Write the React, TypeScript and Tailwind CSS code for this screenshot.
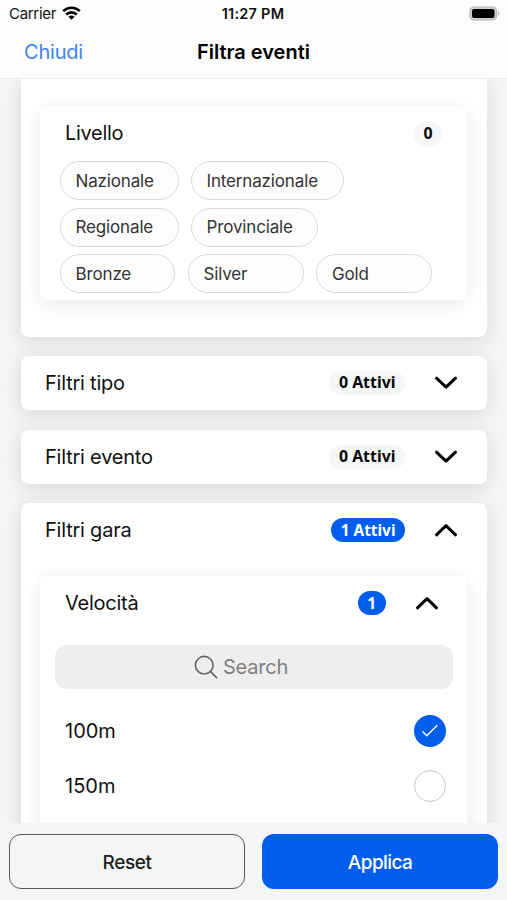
import type { ReactNode } from "react";

const cardShadow = "shadow-[0_4px_20px_rgba(0,0,0,0.12)]";

function Chevron({ up = false }: { up?: boolean }) {
  return (
    <svg width="24" height="14" viewBox="0 0 24 14" fill="none" stroke="#000" strokeWidth="3" strokeLinecap="round" strokeLinejoin="round">
      <path d={up ? "M2.5 11.8 12 2.6l9.5 9.2" : "M2.5 2.2 12 11.2l9.5-9"} />
    </svg>
  );
}

function Badge({ children, active = false }: { children: ReactNode; active?: boolean }) {
  return (
    <span
      className={`flex h-6 items-center justify-center rounded-full px-[9.5px] font-['Noto_Sans',sans-serif] font-bold ${
        active ? "bg-[#005eea] text-[15.4px] text-white" : "bg-[#f5f6f8] text-[15.9px] text-[#080808]"
      }`}
    >
      {children}
    </span>
  );
}

function Pill({ label, width }: { label: string; width: string }) {
  return (
    <div className={`flex h-[39px] items-center rounded-full border border-[#d9d9d9] bg-[#fdfdfd] pt-[2px] pl-[15px] text-[17px] tracking-[-0.15px] text-[#333] ${width}`}>
      {label}
    </div>
  );
}

function FilterHeader({ title, active = false }: { title: string; active?: boolean }) {
  return (
    <div className="flex h-[54px] items-center pr-[29px] pl-6">
      <span className="flex-1 text-xl tracking-[-0.22px]">{title}</span>
      <Badge active={active}>{active ? "1 Attivi" : "0 Attivi"}</Badge>
      <span className="ml-[29px]">
        <Chevron up={active} />
      </span>
    </div>
  );
}

export default function App() {
  return (
    <div className="flex h-[900px] w-[507px] flex-col overflow-hidden bg-[#f3f5f7] font-[Inter,sans-serif] text-[#111]">
      <header className="z-10 h-[79px] shrink-0 border-b border-[#e9eaeb] bg-[#fdfdfd]">
        <div className="grid h-7 grid-cols-3 items-center pr-[7px] pl-[9px] text-[15px]">
          <span className="flex items-center gap-[6px] tracking-[-0.3px]">
            Carrier
            <svg className="-mt-[2px]" width="19" height="14" viewBox="0 0 19 14" fill="none" stroke="#000" strokeWidth="2.6">
              <path d="M1.2 5.2C5.8.6 13.2.6 17.8 5.2" />
              <path d="M4.2 8.5c3-2.9 7.6-2.9 10.6 0" />
              <path d="M6.4 10.7c1.8-1.6 4.4-1.6 6.2 0L9.5 13.8z" fill="#000" stroke="none" />
            </svg>
          </span>
          <span className="-ml-[3px] text-center text-[14.5px] font-semibold tracking-[0.25px]">11:27 PM</span>
          <span className="flex justify-end">
            <svg className="-mt-[2px]" width="31" height="15" viewBox="0 0 31 15">
              <rect x="1" y="1" width="26.5" height="13" rx="4" fill="#d0d0d0" stroke="#b8b8b8" strokeWidth="1.2" />
              <rect x="3" y="3" width="22.5" height="9" rx="2" fill="#000" />
              <path d="M28.8 5.3c2 1 2 3.6 0 4.5z" fill="#b8b8b8" />
            </svg>
          </span>
        </div>
        <div className="grid grid-cols-[1fr_auto_1fr] items-center px-6 pt-[10px]">
          <span className="text-xl tracking-[-0.2px] text-[#3f84ed]">Chiudi</span>
          <h1 className="text-xl font-semibold tracking-[-0.02px] text-black">Filtra eventi</h1>
          <span />
        </div>
      </header>

      <main className="flex h-[744px] shrink-0 flex-col gap-[19.5px] overflow-hidden pr-5 pl-[21px]">
        <section className={`h-[258px] shrink-0 rounded-b-lg bg-white pt-[27px] pr-5 pl-[19px] ${cardShadow}`}>
          <div className="h-[194px] rounded-lg bg-white shadow-[0_4px_20px_rgba(0,0,0,0.09)]">
            <div className="flex h-[55px] items-center justify-between pr-[25px] pl-[25px]">
              <span className="-mt-px text-xl tracking-[-0.3px]">Livello</span>
              <Badge>0</Badge>
            </div>
            <div className="flex flex-col gap-[7.5px] pl-[19.5px]">
              <div className="flex gap-[12px]">
                <Pill label="Nazionale" width="w-[119px]" />
                <Pill label="Internazionale" width="w-[153px]" />
              </div>
              <div className="flex gap-[12px]">
                <Pill label="Regionale" width="w-[119px]" />
                <Pill label="Provinciale" width="w-[127px]" />
              </div>
              <div className="flex gap-[12.5px]">
                <Pill label="Bronze" width="w-[115.5px]" />
                <Pill label="Silver" width="w-[116px]" />
                <Pill label="Gold" width="w-[116px]" />
              </div>
            </div>
          </div>
        </section>

        <section className={`-mt-[0.2px] shrink-0 rounded-lg bg-white ${cardShadow}`}>
          <FilterHeader title="Filtri tipo" />
        </section>
        <section className={`-mt-[0.2px] shrink-0 rounded-lg bg-white ${cardShadow}`}>
          <FilterHeader title="Filtri evento" />
        </section>
        <section className={`h-[420px] shrink-0 rounded-t-lg bg-white ${cardShadow}`}>
          <FilterHeader title="Filtri gara" active />
          <div className="mt-[19px] mr-5 ml-[19px] h-[340px] rounded-t-lg bg-white shadow-[0_4px_20px_rgba(0,0,0,0.09)]">
            <div className="flex h-[54px] items-center pr-[28.5px] pl-[25px]">
              <span className="flex-1 text-xl tracking-[-0.25px]">Velocità</span>
              <Badge active>1</Badge>
              <span className="ml-[29px]">
                <Chevron up />
              </span>
            </div>
            <div className="mt-[15px] mr-[14px] ml-[15px] flex h-11 items-center justify-center gap-[5px] rounded-xl bg-[#eee] pr-[26px] text-xl tracking-[-0.2px] text-[#808080]">
              <svg width="24" height="24" viewBox="0 0 24 24" fill="none" stroke="#666" strokeWidth="1.6" strokeLinecap="round">
                <circle cx="10.2" cy="10.2" r="8.8" />
                <path d="m16.6 16.6 6 6" />
              </svg>
              Search
            </div>
            <div className="mt-[14px] flex h-[55px] items-center justify-between pr-[21px] pl-[25px] text-xl">
              <span>100m</span>
              <span className="flex size-8 items-center justify-center rounded-full bg-[#005eea]">
                <svg width="18" height="14" viewBox="0 0 18 14" fill="none" stroke="#fff" strokeWidth="1.4">
                  <path d="m1.5 7.5 4.3 4.3L16.3 1.3" />
                </svg>
              </span>
            </div>
            <div className="flex h-[55px] items-center justify-between pr-[21px] pl-[25px] text-xl">
              <span>150m</span>
              <span className="size-8 rounded-full border-[1.5px] border-[#c8c8c8]" />
            </div>
          </div>
        </section>
      </main>

      <footer className="z-10 grid h-[77px] shrink-0 grid-cols-2 gap-[17px] bg-[#f3f5f7] px-[9px] pt-[11px] pb-[11px]">
        <button className="rounded-xl border border-[#555] pt-[3px] text-[19px] font-medium tracking-[-0.45px] text-[#222]">Reset</button>
        <button className="rounded-xl bg-[#005eea] pt-[3px] text-[19px] font-medium tracking-[-0.6px] text-white">Applica</button>
      </footer>
    </div>
  );
}
